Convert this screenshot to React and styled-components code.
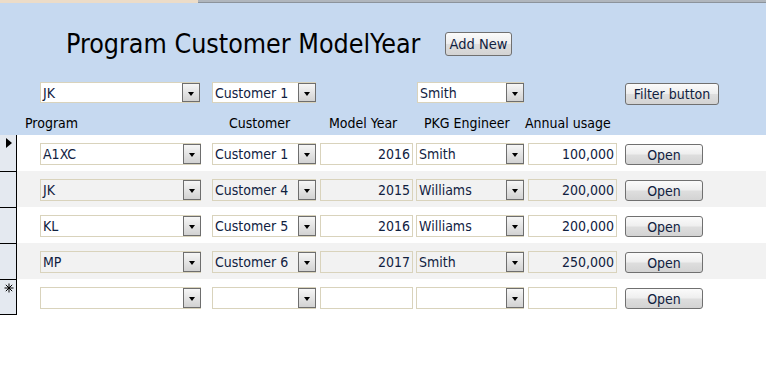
import React from 'react';
import styled, { createGlobalStyle } from 'styled-components';

const FONT = `"DejaVu Sans Condensed", "Liberation Sans", sans-serif`;
const COLS = '172px 108px 96px 112px 97px 78px';

const Global = createGlobalStyle`
  html, body { margin: 0; padding: 0; background: #fff; }
  body { font-family: ${FONT}; }
  * { box-sizing: border-box; }
`;

const Page = styled.div`
  width: 766px;
  height: 373px;
  overflow: hidden;
  background: #fff;
  display: flex;
  flex-direction: column;
`;

const TopStrip = styled.div`
  height: 3px;
  display: flex;
`;
const TabEdge = styled.div`
  width: 198px;
  background: #ecdcc8;
`;
const StripRest = styled.div`
  flex: 1;
  background: #b0b6bd;
  border-bottom: 1px solid #8c939b;
`;

const Header = styled.section`
  height: 132px;
  background: #c6d9f0;
  display: flex;
  flex-direction: column;
  padding-top: 29px;
`;

const TitleRow = styled.div`
  display: flex;
  align-items: center;
  height: 24px;
  padding-left: 66px;
`;

const Title = styled.h1`
  margin: 0;
  width: 379px;
  flex: none;
  white-space: nowrap;
  font: 400 26.6px/24px ${FONT};
  color: #000;
`;

const AccessButton = styled.button`
  width: ${(p) => p.$w}px;
  height: ${(p) => p.$h}px;
  margin-top: ${(p) => p.$mt || 0}px;
  padding: 0;
  border: 1px solid #707070;
  border-radius: 3px;
  background: linear-gradient(#fbfbfb, #eeeeee 48%, #dedede 52%, #d3d3d3);
  font: 400 ${(p) => p.$fs || 14}px/1 ${FONT};
  color: #10213f;
  text-align: center;
  cursor: default;
`;

const FilterRow = styled.div`
  display: grid;
  grid-template-columns: ${COLS};
  align-items: start;
  padding-left: 40px;
  margin-top: 26px;
  height: 22px;
`;

const LabelRow = styled.div`
  display: grid;
  grid-template-columns: 204px 100px 95px 101px 1fr;
  padding-left: 25px;
  margin-top: 11px;
  height: 16px;
  font: 400 14px/16px ${FONT};
  color: #000;
`;

const Label = styled.span`
  white-space: nowrap;
`;

const Combo = styled.div`
  display: flex;
  width: ${(p) => p.$w}px;
  height: ${(p) => p.$h || 22}px;
  margin-left: ${(p) => p.$ml || 0}px;
  border: 1px solid #d9d3bc;
  background: ${(p) => (p.$clear ? 'transparent' : '#fff')};
`;

const ComboText = styled.span`
  flex: 1;
  padding: 0 2px;
  font: 400 14px/20px ${FONT};
  color: #10213f;
  white-space: nowrap;
  overflow: hidden;
`;

const DropButton = styled.span`
  flex: none;
  width: 18px;
  margin-right: -1px;
  border: 1px solid #6e6e6e;
  background: linear-gradient(#f6f6f6, #e4e4e4 50%, #d2d2d2);
  display: flex;
  align-items: center;
  justify-content: center;
  padding-top: 2px;

  &::after {
    content: '';
    border-left: 3.5px solid transparent;
    border-right: 3.5px solid transparent;
    border-top: 4px solid #000;
  }
`;

const TextBox = styled.div`
  width: ${(p) => p.$w}px;
  height: 22px;
  border: 1px solid #d9d3bc;
  background: ${(p) => (p.$clear ? 'transparent' : '#fff')};
  padding: 0 2px;
  text-align: right;
  font: 400 14px/20px ${FONT};
  color: #10213f;
  white-space: nowrap;
`;

const Detail = styled.section`
  display: flex;
  flex-direction: column;
`;

const Row = styled.div`
  display: flex;
  height: 36px;
  background: ${(p) => (p.$alt ? '#f2f2f2' : '#fff')};
`;

const Selector = styled.div`
  position: relative;
  flex: none;
  width: 17px;
  background: #e4e9f0;
  border-right: 1px solid #000;
  border-top: ${(p) => (p.$first ? 'none' : '1px solid #000')};
  border-bottom: ${(p) => (p.$last ? '1px solid #000' : 'none')};
`;

const CurrentMark = styled.span`
  position: absolute;
  top: 3px;
  left: 6px;
  border-left: 6px solid #000;
  border-top: 5px solid transparent;
  border-bottom: 5px solid transparent;
`;

const NewMark = styled.svg`
  position: absolute;
  top: 3px;
  left: 4px;
`;

const Cells = styled.div`
  display: grid;
  grid-template-columns: ${COLS};
  align-items: start;
  padding-left: 23px;
  padding-top: 8px;
`;

const Dropdown = ({ w, h, ml, clear, value }) => (
  <Combo $w={w} $h={h} $ml={ml} $clear={clear}>
    <ComboText>{value}</ComboText>
    <DropButton />
  </Combo>
);

const records = [
  { p: 'A1XC', c: 'Customer 1', y: '2016', e: 'Smith', u: '100,000' },
  { p: 'JK', c: 'Customer 4', y: '2015', e: 'Williams', u: '200,000' },
  { p: 'KL', c: 'Customer 5', y: '2016', e: 'Williams', u: '200,000' },
  { p: 'MP', c: 'Customer 6', y: '2017', e: 'Smith', u: '250,000' },
  { p: '', c: '', y: '', e: '', u: '', isNew: true },
];

export default function App() {
  return (
    <>
      <Global />
      <Page>
        <TopStrip>
          <TabEdge />
          <StripRest />
        </TopStrip>
        <Header>
          <TitleRow>
            <Title>Program Customer ModelYear</Title>
            <AccessButton $w={67} $h={24} $fs={14.5}>Add New</AccessButton>
          </TitleRow>
          <FilterRow>
            <Dropdown w={160} h={21} value="JK" />
            <Dropdown w={104} h={21} value="Customer 1" />
            <span />
            <Dropdown w={107} h={21} ml={1} value="Smith" />
            <span />
            <AccessButton $w={94} $h={22} $mt={1}>Filter button</AccessButton>
          </FilterRow>
          <LabelRow>
            <Label>Program</Label>
            <Label>Customer</Label>
            <Label>Model Year</Label>
            <Label>PKG Engineer</Label>
            <Label>Annual usage</Label>
          </LabelRow>
        </Header>
        <Detail>
          {records.map((r, i) => {
            const alt = i % 2 === 1;
            return (
              <Row key={i} $alt={alt}>
                <Selector $first={i === 0} $last={i === records.length - 1}>
                  {i === 0 && <CurrentMark />}
                  {r.isNew && (
                    <NewMark width="10" height="10" viewBox="0 0 10 10">
                      <g stroke="#000" strokeWidth="1">
                        <line x1="5" y1="0.5" x2="5" y2="9.5" />
                        <line x1="0.5" y1="5" x2="9.5" y2="5" />
                        <line x1="1.8" y1="1.8" x2="8.2" y2="8.2" />
                        <line x1="8.2" y1="1.8" x2="1.8" y2="8.2" />
                      </g>
                    </NewMark>
                  )}
                </Selector>
                <Cells>
                  <Dropdown w={161} clear={alt} value={r.p} />
                  <Dropdown w={104} clear={alt} value={r.c} />
                  <TextBox $w={93} $clear={alt}>{r.y}</TextBox>
                  <Dropdown w={108} clear={alt} value={r.e} />
                  <TextBox $w={89} $clear={alt}>{r.u}</TextBox>
                  <AccessButton $w={78} $h={21} $mt={1}>Open</AccessButton>
                </Cells>
              </Row>
            );
          })}
        </Detail>
      </Page>
    </>
  );
}
